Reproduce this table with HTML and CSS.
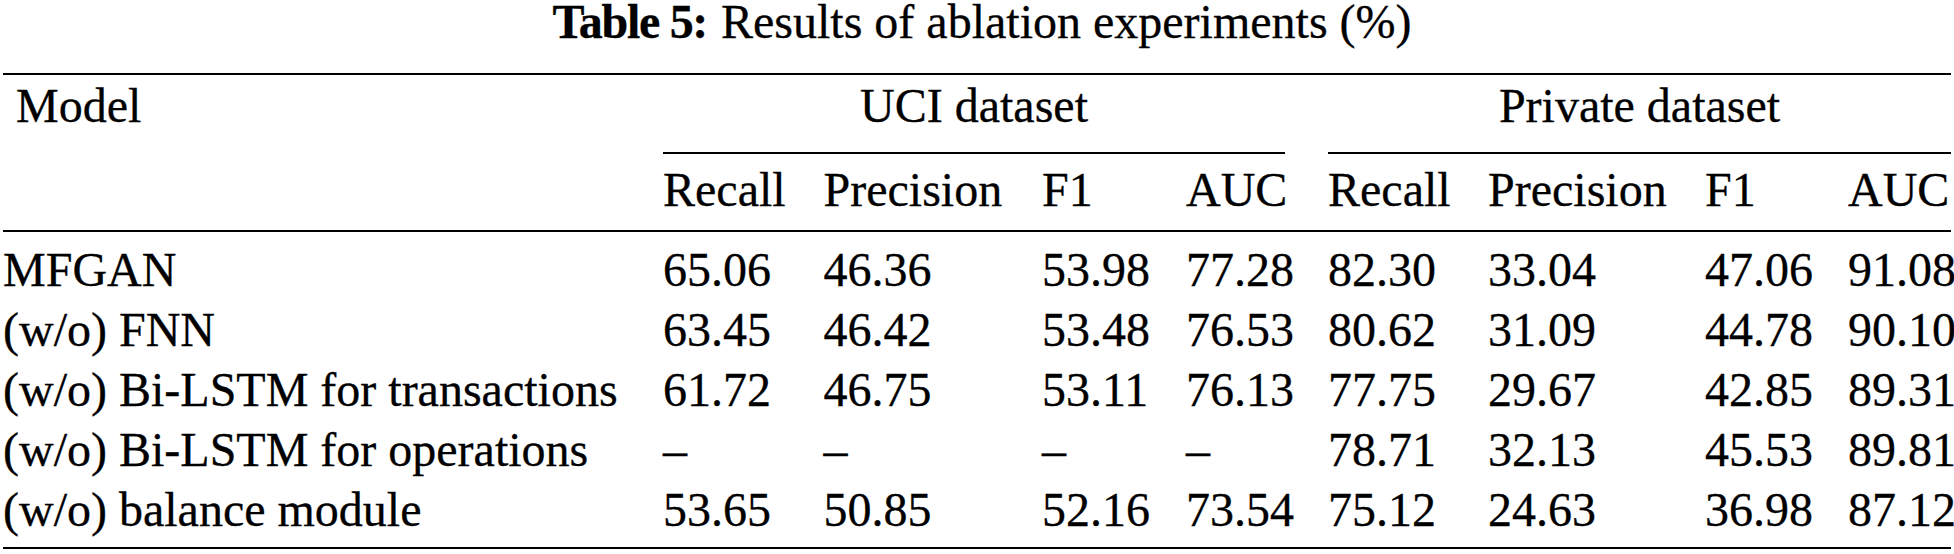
FILE: index.html
```html
<!DOCTYPE html>
<html lang="en">
<head>
<meta charset="utf-8">
<title>Table 5: Results of ablation experiments (%)</title>
<link rel="stylesheet" href="styles.css">
</head>
<body>
<div class="page">
  <p class="caption"><span class="cap-label">Table 5:</span> Results of ablation experiments (%)</p>
  <div class="tbl">
    <div class="rule"></div>
    <div class="row head1">
      <div class="cell model">Model</div>
      <div class="group uci">UCI dataset</div>
      <div class="group priv">Private dataset</div>
    </div>
    <div class="row head2">
      <div class="cell"></div>
      <div class="cell">Recall</div>
      <div class="cell">Precision</div>
      <div class="cell">F1</div>
      <div class="cell">AUC</div>
      <div class="cell">Recall</div>
      <div class="cell">Precision</div>
      <div class="cell">F1</div>
      <div class="cell">AUC</div>
    </div>
    <div class="rule"></div>
    <div class="body">
      <div class="row data">
        <div class="cell">MFGAN</div>
        <div class="cell">65.06</div>
        <div class="cell">46.36</div>
        <div class="cell">53.98</div>
        <div class="cell">77.28</div>
        <div class="cell">82.30</div>
        <div class="cell">33.04</div>
        <div class="cell">47.06</div>
        <div class="cell">91.08</div>
      </div>
      <div class="row data">
        <div class="cell">(w/o) FNN</div>
        <div class="cell">63.45</div>
        <div class="cell">46.42</div>
        <div class="cell">53.48</div>
        <div class="cell">76.53</div>
        <div class="cell">80.62</div>
        <div class="cell">31.09</div>
        <div class="cell">44.78</div>
        <div class="cell">90.10</div>
      </div>
      <div class="row data">
        <div class="cell">(w/o) Bi-LSTM for transactions</div>
        <div class="cell">61.72</div>
        <div class="cell">46.75</div>
        <div class="cell">53.11</div>
        <div class="cell">76.13</div>
        <div class="cell">77.75</div>
        <div class="cell">29.67</div>
        <div class="cell">42.85</div>
        <div class="cell">89.31</div>
      </div>
      <div class="row data">
        <div class="cell">(w/o) Bi-LSTM for operations</div>
        <div class="cell">–</div>
        <div class="cell">–</div>
        <div class="cell">–</div>
        <div class="cell">–</div>
        <div class="cell">78.71</div>
        <div class="cell">32.13</div>
        <div class="cell">45.53</div>
        <div class="cell">89.81</div>
      </div>
      <div class="row data">
        <div class="cell">(w/o) balance module</div>
        <div class="cell">53.65</div>
        <div class="cell">50.85</div>
        <div class="cell">52.16</div>
        <div class="cell">73.54</div>
        <div class="cell">75.12</div>
        <div class="cell">24.63</div>
        <div class="cell">36.98</div>
        <div class="cell">87.12</div>
      </div>
    </div>
    <div class="rule"></div>
  </div>
</div>
</body>
</html>
```

FILE: styles.css
```css
* {
  box-sizing: border-box;
}

html, body {
  margin: 0;
  padding: 0;
  background: #ffffff;
}

body {
  width: 1954px;
  height: 554px;
  overflow: hidden;
  font-family: "Liberation Serif", "Times New Roman", serif;
  font-size: 48px;
  color: #000000;
  -webkit-text-stroke: 0.3px #000000;
}

.page {
  width: 1954px;
  padding-left: 3px;
}

.caption {
  margin: 0 0 31px 0;
  width: 1948px;
  padding-left: 10px;
  padding-top: 6px;
  line-height: 31px;
  height: 42px;
  text-align: center;
  white-space: nowrap;
}

.cap-label {
  font-weight: bold;
  letter-spacing: -1.3px;
  margin-right: 2px;
}

.tbl {
  width: 1948px;
  --cols: 660px 160.5px 218.5px 144px 142px 160px 217px 143px 103px;
}

.rule {
  height: 2px;
  background: #000000;
}

.row {
  display: grid;
  grid-template-columns: var(--cols);
  line-height: 48px;
  white-space: nowrap;
}

.cell {
  padding-left: 0;
}

.head1 {
  padding-top: 7px;
  align-items: start;
}

.model {
  padding-left: 13px;
}

.group {
  grid-column: span 4;
  text-align: center;
  padding-bottom: 22px;
  border-bottom: 2px solid #000000;
}

.group.uci {
  margin-right: 43px;
}

.head2 {
  padding-top: 12px;
  padding-bottom: 16px;
}

.body {
  padding-top: 8px;
  padding-bottom: 7px;
}

.data {
  padding: 6px 0;
}
```
